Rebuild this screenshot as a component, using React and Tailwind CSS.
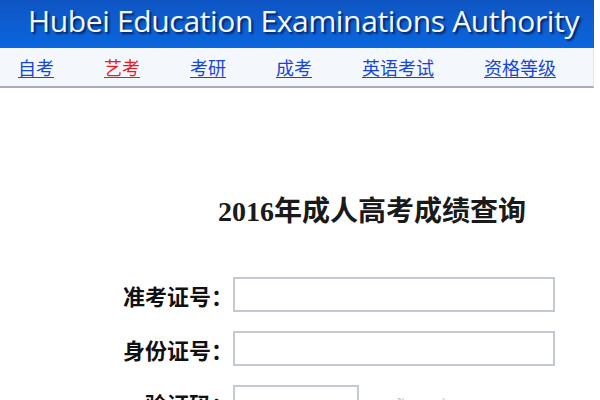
const navItems = [
  { label: "自考", active: false },
  { label: "艺考", active: true },
  { label: "考研", active: false },
  { label: "成考", active: false },
  { label: "英语考试", active: false },
  { label: "资格等级", active: false },
];

const cjk = { fontFamily: '"Noto Sans CJK SC", sans-serif' };

const FormRow = ({ label, inputClass, children }) => (
  <div className="flex items-center">
    <div
      className="w-[233px] shrink-0 text-right text-[22px] font-bold leading-none text-[#111]"
      style={cjk}
    >
      {label}
    </div>
    <div className={`h-[35px] border-2 border-[#c3c9d0] bg-white ${inputClass}`} />
    {children}
  </div>
);

export default function App() {
  return (
    <div className="h-[400px] w-[600px] overflow-hidden bg-white">
      <div className="w-[594px]">
        <div className="h-[48px] overflow-hidden bg-gradient-to-b from-[#0f55c4] to-[#0a66dd] pl-[28px] pt-[1px]">
          <span
            className="whitespace-nowrap text-[30px] leading-[40px] tracking-[-0.35px] text-[#f4f8ff] [text-shadow:2px_2px_2px_rgba(0,20,70,0.8)]"
            style={{ fontFamily: '"Open Sans", sans-serif' }}
          >
            Hubei Education Examinations Authority
          </span>
        </div>
        <div className="flex h-[40px] items-center gap-[50px] border-b-2 border-r border-b-[#a3adbb] border-r-[#e3e8ee] bg-[#f4f8fc] pl-[18px]">
          {navItems.map((item) => (
            <a
              key={item.label}
              href="#"
              className={`text-[18px] leading-none underline underline-offset-2 ${
                item.active ? "text-[#f01818]" : "text-[#1745d6]"
              }`}
              style={cjk}
            >
              {item.label}
            </a>
          ))}
        </div>
      </div>

      <h1
        className="mt-[110px] whitespace-nowrap pl-[218px] text-[28px] font-bold leading-none text-[#1a1a1a]"
        style={{ fontFamily: '"Liberation Serif", "Noto Sans CJK SC", serif' }}
      >
        2016年成人高考成绩查询
      </h1>

      <div className="mt-[51px] flex flex-col gap-[19px]">
        <FormRow label="准考证号：" inputClass="w-[322px]" />
        <FormRow label="身份证号：" inputClass="w-[322px]" />
        <FormRow label="验证码：" inputClass="w-[126px]">
          <div className="ml-[4px] flex items-center gap-[6px] text-[10px] tracking-[3px] text-[#9fb4c4]">
            <span>· ·,</span>
            <span>·%, ·· ·'· ·</span>
          </div>
        </FormRow>
      </div>
    </div>
  );
}
